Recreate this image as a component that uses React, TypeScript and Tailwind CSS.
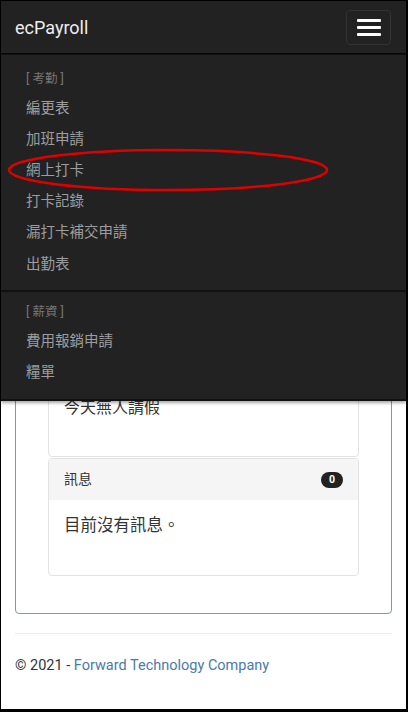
import React, { type FC, type PropsWithChildren } from "react";

const font = { fontFamily: 'Roboto, "Noto Sans CJK TC", "Noto Sans", sans-serif' };

const attendance = ["編更表", "加班申請", "網上打卡", "打卡記錄", "漏打卡補交申請", "出勤表"];
const salary = ["費用報銷申請", "糧單"];

const MenuHeader: FC<PropsWithChildren> = ({ children }) => (
  <li className="h-[22px] mb-[3px] flex items-center text-[12.5px] text-[#777]">{children}</li>
);

const MenuItem: FC<PropsWithChildren> = ({ children }) => (
  <li className="h-[31.2px] flex items-center text-[14.5px] text-[#9d9d9d]">{children}</li>
);

const Card: FC<PropsWithChildren<{ title?: string; badge?: string; className?: string }>> = ({
  title,
  badge,
  className,
  children,
}) => (
  <div className={`border border-[#e3e3e3] rounded-[4px] bg-white ${className ?? ""}`}>
    <div className="h-[41px] bg-[#f5f5f5] px-[15px] flex items-center justify-between rounded-t-[4px]">
      <span className="text-[14px] text-[#333]">{title}</span>
      {badge && (
        <span className="h-[16px] min-w-[22px] px-[6px] rounded-full bg-[#222] text-white text-[10.5px] font-bold flex items-center justify-center">
          {badge}
        </span>
      )}
    </div>
    {children}
  </div>
);

export default function App() {
  return (
    <div
      className="relative w-[408px] h-[712px] overflow-hidden bg-white border-l border-t border-r-2 border-b-[3px] border-black"
      style={font}
    >
      <main className="pt-[69px] px-[14px]">
        <div className="border border-[#7b9ab8] rounded-[4px] px-[32px] pt-[15px] pb-[37px]">
          {/* cards hidden under the open menu */}
          <Card className="h-[252px] mb-[2px]" />
          <Card className="mb-[1px]">
            <p className="px-[15px] pt-[15px] pb-[37px] leading-[22px] text-[16px] text-[#333]">今天無人請假</p>
          </Card>
          <Card title="訊息" badge="0">
            <p className="px-[15px] pt-[15px] pb-[38px] leading-[22px] text-[16.5px] text-[#333]">目前沒有訊息。</p>
          </Card>
        </div>
        <hr className="mt-[19px] border-t border-[#eee]" />
        <footer className="pt-[22px] leading-[20px] text-[14.5px] text-[#333]">
          © 2021 - <a className="text-[#4a7aa9]">Forward Technology Company</a>
        </footer>
      </main>

      <nav className="absolute left-0 top-0 w-full bg-[#222] shadow-[0_2px_3px_rgba(0,0,0,0.35)]">
        <div className="h-[53px] flex items-center justify-between pl-[14px] pr-[15px] border-b border-[#080808]">
          <span className="text-[18px] text-[#eee]">ecPayroll</span>
          <button className="w-[45px] h-[35px] border border-[#333] rounded-[4px] flex flex-col items-center justify-center gap-[4px]">
            <span className="block w-[24px] h-[3px] bg-white rounded-[1px]" />
            <span className="block w-[24px] h-[3px] bg-white rounded-[1px]" />
            <span className="block w-[24px] h-[3px] bg-white rounded-[1px]" />
          </button>
        </div>
        <div className="border-t border-[#101010]">
          <ul className="pl-[25px] pt-[13px] pb-[10px]">
            <MenuHeader>[ 考勤 ]</MenuHeader>
            {attendance.map((item) => (
              <MenuItem key={item}>{item}</MenuItem>
            ))}
          </ul>
          <div className="h-[2px] bg-[#111]" />
          <ul className="pl-[25px] pt-[9px] pb-[10px] border-b-2 border-[#111]">
            <MenuHeader>[ 薪資 ]</MenuHeader>
            {salary.map((item) => (
              <MenuItem key={item}>{item}</MenuItem>
            ))}
          </ul>
        </div>
      </nav>

      <svg className="absolute left-0 top-0 pointer-events-none" width="408" height="712">
        <ellipse cx="167" cy="169" rx="159" ry="20" fill="none" stroke="#e00000" strokeWidth="2.5" />
      </svg>
    </div>
  );
}
